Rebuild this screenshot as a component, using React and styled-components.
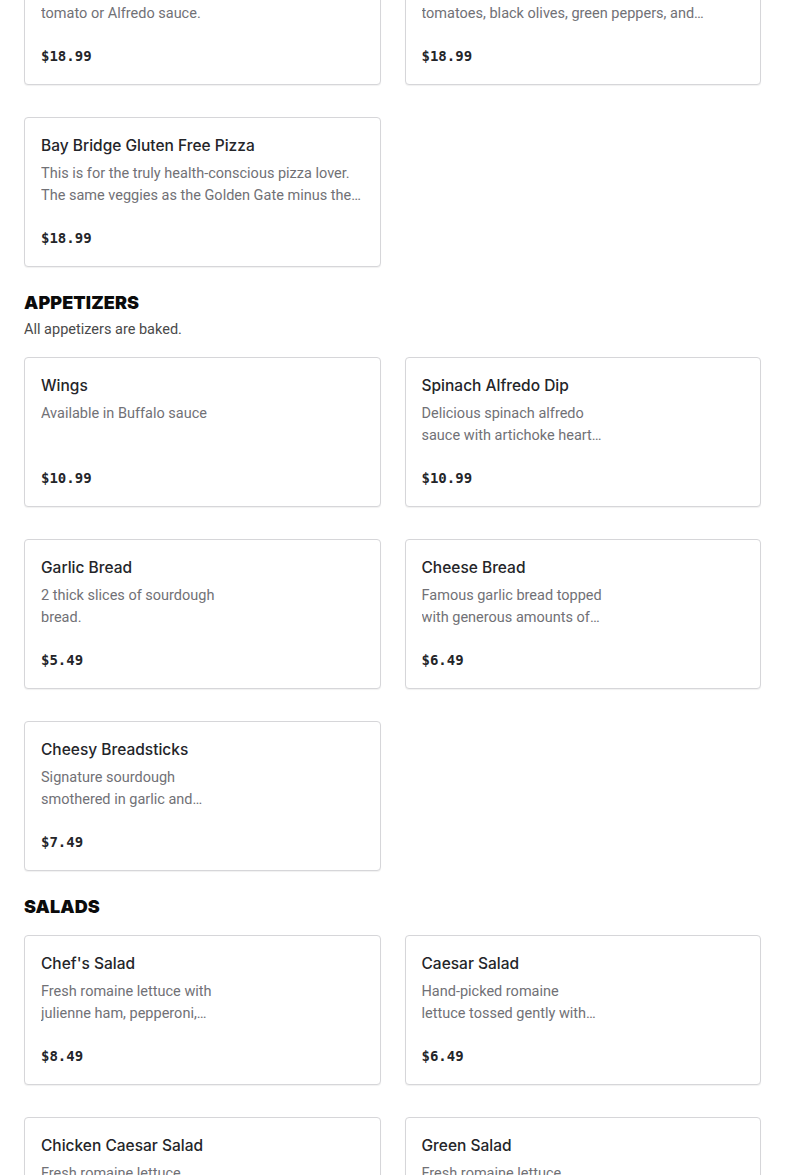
import React from "react";
import styled, { createGlobalStyle } from "styled-components";

const Global = createGlobalStyle`
  html, body {
    margin: 0;
    padding: 0;
    background: #ffffff;
    overflow: hidden;
  }
  body {
    font-family: "Roboto", "Liberation Sans", sans-serif;
    color: #242529;
  }
`;

const Page = styled.main`
  padding: 0 24px;
  margin-top: -65px;
  display: flex;
  flex-direction: column;
  gap: 24px;
`;

const Section = styled.section`
  display: flex;
  flex-direction: column;
`;

const Heading = styled.h2`
  margin: 0;
  font-family: "Inter", "Liberation Sans", sans-serif;
  font-weight: 900;
  font-size: 18px;
  line-height: 24px;
  letter-spacing: 0.1px;
  color: #0b0b0b;
`;

const Subtitle = styled.p`
  margin: 4px 0 0;
  font-size: 14.5px;
  line-height: 22px;
  color: #4a4a4a;
`;

const Grid = styled.div`
  display: grid;
  grid-template-columns: 1fr 1fr;
  column-gap: 24px;
  row-gap: 32px;
  margin-top: ${(p) => (p.$flush ? "0" : "16px")};
`;

const Card = styled.article`
  box-sizing: border-box;
  height: 150px;
  padding: 16px 16px 17px;
  border: 1px solid #d6d6d9;
  border-radius: 4px;
  box-shadow: 0 1px 1px rgba(0, 0, 0, 0.06);
  display: flex;
  flex-direction: column;
  background: #fff;
`;

const Title = styled.h3`
  margin: 0;
  font-family: "Inter", "Liberation Sans", sans-serif;
  font-weight: 500;
  font-size: 15.5px;
  line-height: 24px;
  color: #242529;
`;

const Desc = styled.p`
  margin: 5px 0 0;
  font-size: 14.5px;
  line-height: 22px;
  color: #717176;
  white-space: pre-line;
  max-width: ${(p) => (p.$narrow ? "183px" : "none")};
  display: -webkit-box;
  -webkit-line-clamp: 2;
  -webkit-box-orient: vertical;
  overflow: hidden;
`;

const Price = styled.div`
  margin-top: auto;
  font-family: "DejaVu Sans Mono", "Liberation Mono", monospace;
  font-weight: 700;
  font-size: 14px;
  line-height: 22px;
  color: #242529;
`;

const sections = [
  {
    flush: true,
    items: [
      {
        name: "Build Your Own Pizza",
        desc: "Start with our sourdough crust and your choice of\ntomato or Alfredo sauce.",
        price: "$18.99",
      },
      {
        name: "Golden Gate Veggie Pizza",
        desc: "Fresh mushrooms, artichoke hearts, sun-dried\ntomatoes, black olives, green peppers, and onions.",
        price: "$18.99",
      },
      {
        name: "Bay Bridge Gluten Free Pizza",
        desc: "This is for the truly health-conscious pizza lover. The same veggies as the Golden Gate minus the cheese.",
        price: "$18.99",
      },
    ],
  },
  {
    title: "APPETIZERS",
    subtitle: "All appetizers are baked.",
    items: [
      { name: "Wings", desc: "Available in Buffalo sauce", price: "$10.99", narrow: true },
      {
        name: "Spinach Alfredo Dip",
        desc: "Delicious spinach alfredo sauce with artichoke hearts, served with sourdough bread.",
        price: "$10.99",
        narrow: true,
      },
      { name: "Garlic Bread", desc: "2 thick slices of sourdough bread.", price: "$5.49", narrow: true },
      {
        name: "Cheese Bread",
        desc: "Famous garlic bread topped with generous amounts of mozzarella cheese.",
        price: "$6.49",
        narrow: true,
      },
      {
        name: "Cheesy Breadsticks",
        desc: "Signature sourdough smothered in garlic and cheese.",
        price: "$7.49",
        narrow: true,
      },
    ],
  },
  {
    title: "SALADS",
    items: [
      {
        name: "Chef's Salad",
        desc: "Fresh romaine lettuce with julienne ham, pepperoni, and cheese.",
        price: "$8.49",
        narrow: true,
      },
      {
        name: "Caesar Salad",
        desc: "Hand-picked romaine lettuce tossed gently with Caesar dressing.",
        price: "$6.49",
        narrow: true,
      },
      {
        name: "Chicken Caesar Salad",
        desc: "Fresh romaine lettuce, grilled chicken and Caesar dressing.",
        price: "$9.49",
        narrow: true,
      },
      {
        name: "Green Salad",
        desc: "Fresh romaine lettuce, tomatoes and cucumbers.",
        price: "$5.49",
        narrow: true,
      },
    ],
  },
];

function MenuCard({ item }) {
  return (
    <Card>
      <Title>{item.name}</Title>
      <Desc $narrow={item.narrow}>{item.desc}</Desc>
      <Price>{item.price}</Price>
    </Card>
  );
}

export default function App() {
  return (
    <>
      <Global />
      <Page>
        {sections.map((s, i) => (
          <Section key={i}>
            {s.title && <Heading>{s.title}</Heading>}
            {s.subtitle && <Subtitle>{s.subtitle}</Subtitle>}
            <Grid $flush={s.flush}>
              {s.items.map((item) => (
                <MenuCard key={item.name} item={item} />
              ))}
            </Grid>
          </Section>
        ))}
      </Page>
    </>
  );
}
